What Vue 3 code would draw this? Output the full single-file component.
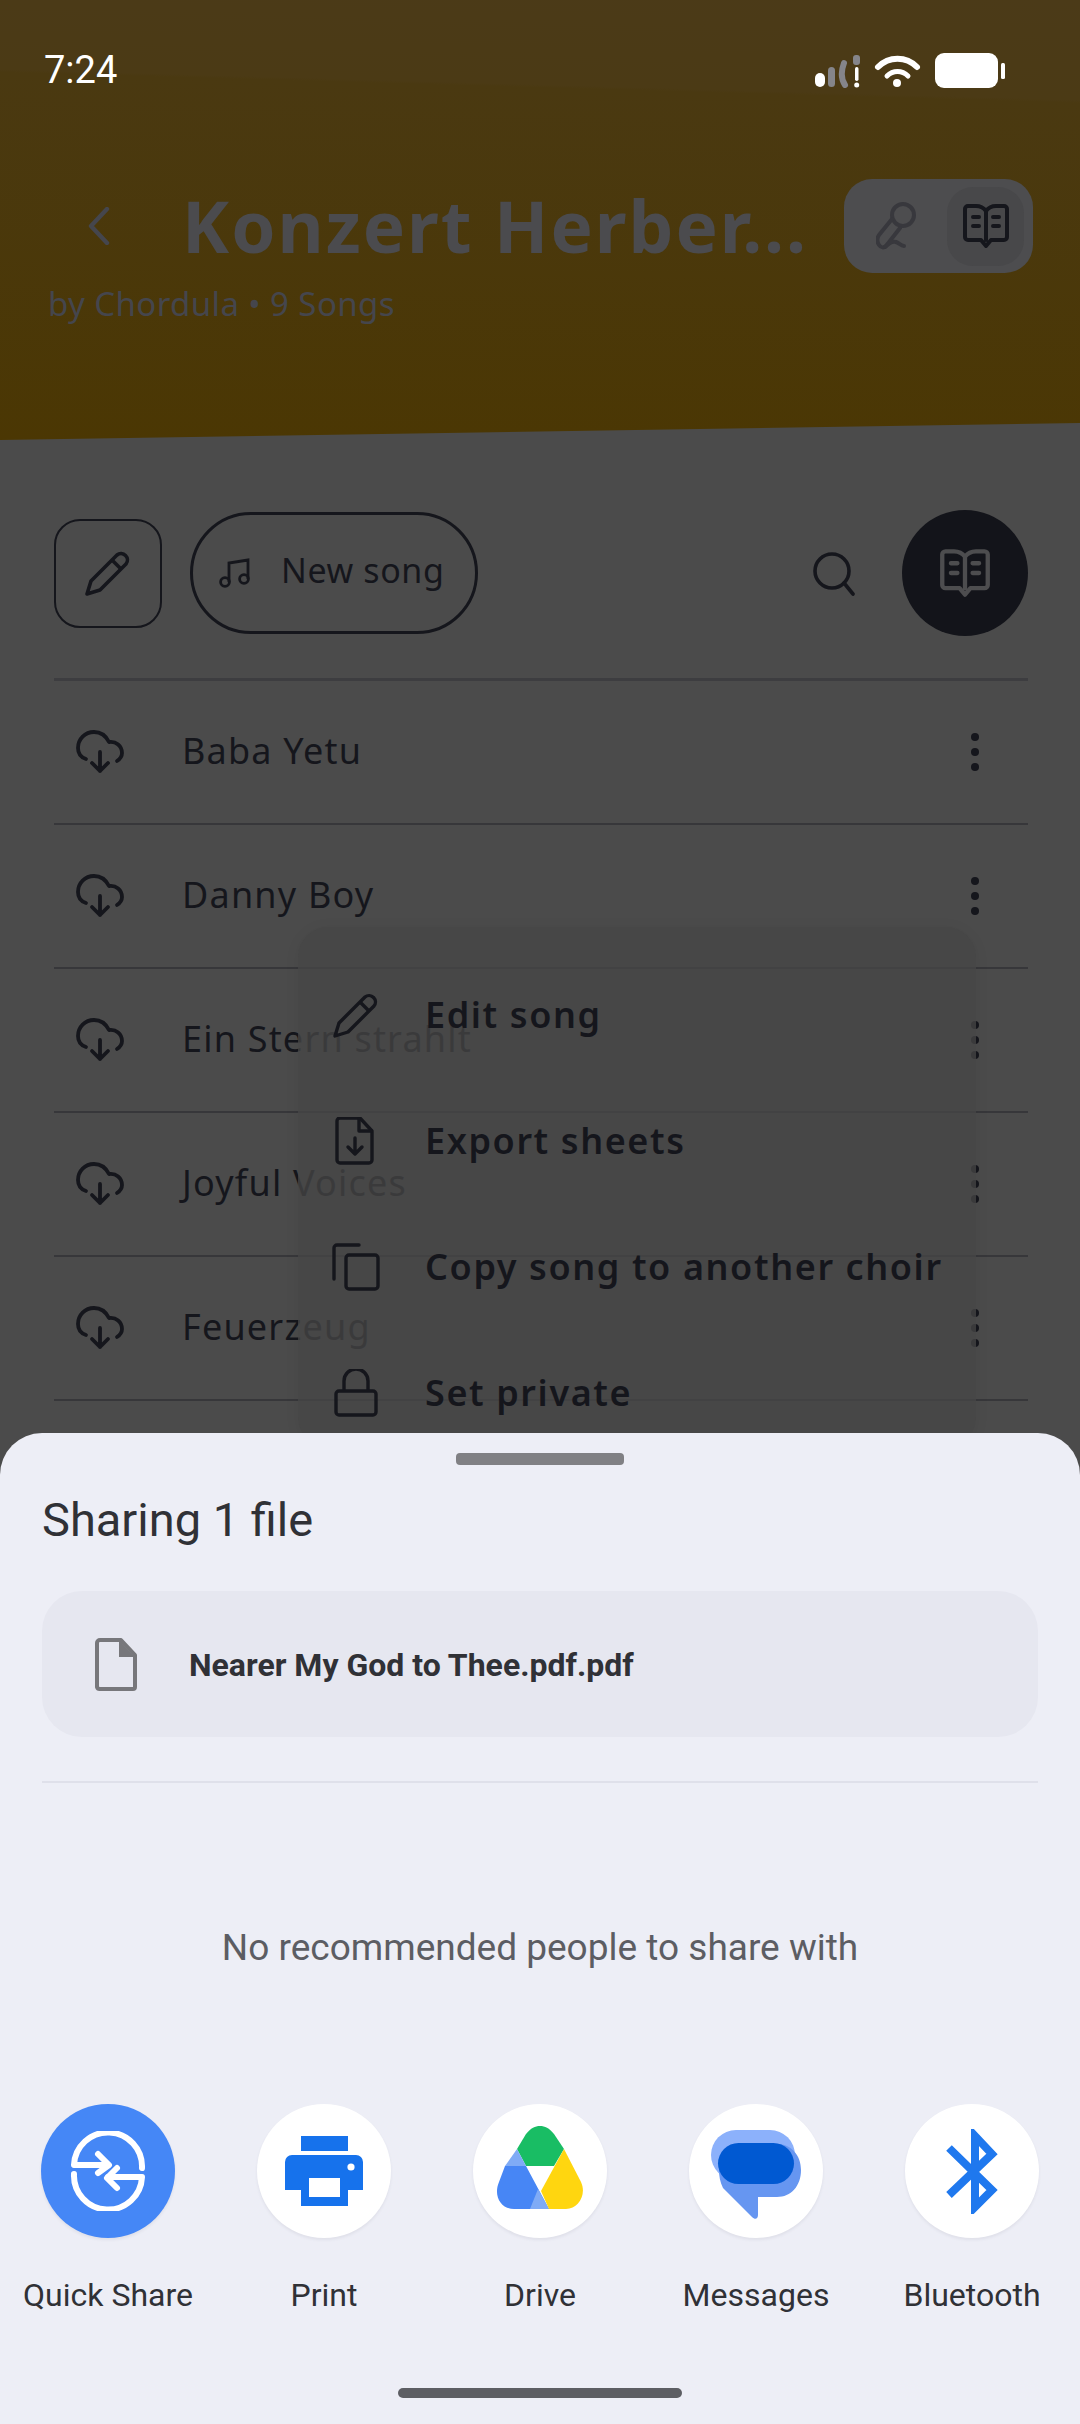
<template>
  <div class="page">
    <header class="hero">
      <div class="status">
        <span class="time">7:24</span>
        <svg class="status-icons" width="190" height="35" viewBox="0 0 190 35">
          <rect x="0" y="20" width="10" height="14" rx="5" fill="#fff" />
          <rect x="13" y="14" width="7" height="20" rx="3.5" fill="#85858a" />
          <path d="M29 10C26 18 26 26 30 32" fill="none" stroke="#85858a" stroke-width="6" stroke-linecap="round" />
          <rect x="38" y="2" width="7" height="10" rx="3" fill="#85858a" />
          <rect x="40" y="14" width="3.5" height="14" rx="1.7" fill="#fff" />
          <circle cx="41.7" cy="32" r="2.5" fill="#fff" />
          <path d="M63 14C74 3 91 3 102 14" fill="none" stroke="#fff" stroke-width="6" stroke-linecap="round" />
          <path d="M72 23C78 17 87 17 93 23" fill="none" stroke="#fff" stroke-width="5" stroke-linecap="round" />
          <circle cx="82" cy="30" r="4" fill="#fff" />
          <rect x="120" y="0" width="63" height="35" rx="9" fill="#fff" />
          <rect x="186" y="10" width="4" height="16" rx="1.5" fill="#fff" />
        </svg>
      </div>
      <div class="hero-row">
        <svg class="back" width="22" height="38" viewBox="0 0 22 38">
          <path d="M19 2L3 19l16 17" fill="none" stroke="#45464d" stroke-width="4.4" stroke-linecap="round" stroke-linejoin="round" />
        </svg>
        <h1 class="title">Konzert Herber...</h1>
        <div class="mode-toggle">
          <div class="mode-off">
            <svg width="42" height="48" viewBox="0 0 42 48" fill="none" stroke="#38383d" stroke-width="4" stroke-linecap="round" stroke-linejoin="round">
              <circle cx="27" cy="13" r="11" />
              <path d="M16 17L3 33c-2 3-2 7 0 10 2 3 5 3 7 1l14-18" />
              <path d="M9 45c4-4 8-6 11-5 3 1 5 4 8 4" />
            </svg>
          </div>
          <div class="mode-on">
            <svg width="48" height="46" viewBox="0 0 48 46" fill="none" stroke="#15161c" stroke-width="4" stroke-linejoin="round" stroke-linecap="round">
              <path d="M24 8C21 4 17 3 14 3H6a3 3 0 0 0-3 3v28a3 3 0 0 0 3 3h13l5 6 5-6h13a3 3 0 0 0 3-3V6a3 3 0 0 0-3-3h-8c-3 0-7 1-10 5zM24 8v29" />
              <path d="M11 14h6M11 23h6M31 14h6M31 23h6" />
            </svg>
          </div>
        </div>
      </div>
      <p class="byline">by Chordula • 9 Songs</p>
    </header>

    <div class="toolbar">
      <button class="edit-btn">
        <svg width="48" height="48" viewBox="0 0 48 48" fill="none" stroke="#15161c" stroke-width="3.6" stroke-linejoin="round">
          <path d="M3 45l4-13L33 6a6.4 6.4 0 0 1 9 9L16 41z" />
          <path d="M28 11l9 9" />
        </svg>
      </button>
      <button class="new-btn">
        <svg width="32" height="30" viewBox="0 0 32 30" fill="none" stroke="#15161c" stroke-width="2.8">
          <path d="M10 24V5l19-3v19" />
          <circle cx="6" cy="24" r="4.4" />
          <circle cx="25" cy="21" r="4.4" />
        </svg>
        <span>New song</span>
      </button>
      <svg class="search" width="44" height="45" viewBox="0 0 44 45" fill="none" stroke="#15161c" stroke-width="3.6" stroke-linecap="round">
        <circle cx="20" cy="20" r="17" />
        <path d="M32 32l9 11" />
      </svg>
      <div class="book-btn">
        <svg width="52" height="50" viewBox="0 0 48 46" fill="none" stroke="#4d4d4f" stroke-width="4" stroke-linejoin="round" stroke-linecap="round">
          <path d="M24 8C21 4 17 3 14 3H6a3 3 0 0 0-3 3v28a3 3 0 0 0 3 3h13l5 6 5-6h13a3 3 0 0 0 3-3V6a3 3 0 0 0-3-3h-8c-3 0-7 1-10 5zM24 8v29" />
          <path d="M11 14h6M11 23h6M31 14h6M31 23h6" />
        </svg>
      </div>
    </div>

    <ul class="songs">
      <li v-for="song in songs" :key="song" class="song">
        <svg class="cloud" width="48" height="44" viewBox="0 0 48 44" fill="none" stroke="#15161c" stroke-width="3.8" stroke-linecap="round" stroke-linejoin="round">
          <path d="M10 29C4 27 2 23 2 18 2 9 9 2 18 2c7 0 12 4 15 10 7-1 13 4 13 11 0 3-2 6-5 8" />
          <path d="M24 22v19M16 33l8 8 8-8" />
        </svg>
        <span class="song-name">{{ song }}</span>
        <div class="kebab"><i></i><i></i><i></i></div>
      </li>
    </ul>

    <div class="menu">
      <div class="menu-item">
        <svg width="48" height="48" viewBox="0 0 48 48" fill="none" stroke="#15161c" stroke-width="3.4" stroke-linejoin="round">
          <path d="M3 45l4-13L33 6a6.4 6.4 0 0 1 9 9L16 41z" />
          <path d="M28 11l9 9" />
        </svg>
        <span>Edit song</span>
      </div>
      <div class="menu-item">
        <svg width="48" height="48" viewBox="0 0 48 48" fill="none" stroke="#15161c" stroke-width="3.4" stroke-linejoin="round" stroke-linecap="round">
          <path d="M8 1h20l12 13v29a3 3 0 0 1-3 3H8a3 3 0 0 1-3-3V4a3 3 0 0 1 3-3z" />
          <path d="M27 2v12h12M23 21v15M16 30l7 7 7-7" />
        </svg>
        <span>Export sheets</span>
      </div>
      <div class="menu-item">
        <svg width="48" height="48" viewBox="0 0 48 48" fill="none" stroke="#15161c" stroke-width="3.4" stroke-linejoin="round" stroke-linecap="round">
          <path d="M2 36V5a3 3 0 0 1 3-3h22" />
          <rect x="14" y="12" width="32" height="34" rx="3" />
        </svg>
        <span>Copy song to another choir</span>
      </div>
      <div class="menu-item">
        <svg width="44" height="48" viewBox="0 0 44 48" fill="none" stroke="#15161c" stroke-width="3.4" stroke-linejoin="round">
          <path d="M10 22V12a12 12 0 0 1 24 0v10" />
          <rect x="2" y="22" width="40" height="24" rx="3" />
        </svg>
        <span>Set private</span>
      </div>
    </div>

    <section class="sheet">
      <div class="handle"></div>
      <h2 class="sheet-title">Sharing 1 file</h2>
      <div class="file-card">
        <svg width="42" height="53" viewBox="0 0 42 53">
          <path d="M5 2h21l14 15v32a2 2 0 0 1-2 2H5a3 3 0 0 1-3-2V5a3 3 0 0 1 3-3z" fill="none" stroke="#77777b" stroke-width="4" stroke-linejoin="round" />
          <path d="M24 2l16 17H24z" fill="#77777b" />
        </svg>
        <span class="file-name">Nearer My God to Thee.pdf.pdf</span>
      </div>
      <div class="sheet-line"></div>
      <p class="empty">No recommended people to share with</p>
      <div class="targets">
        <div class="target">
          <div class="disc disc-blue">
            <svg width="80" height="80" viewBox="0 0 80 80" fill="none" stroke="#fff" stroke-width="6" stroke-linecap="round" stroke-linejoin="round">
              <path d="M74 37A34 34 0 0 0 6 34h34" />
              <path d="M30 23l11 11-11 8" />
              <path d="M6 43a34 34 0 0 0 68 3H40" />
              <path d="M49 37L39 47l10 10" />
            </svg>
          </div>
          <span>Quick Share</span>
        </div>
        <div class="target">
          <div class="disc">
            <svg width="78" height="70" viewBox="0 0 78 70" fill="#1672ec">
              <rect x="16" y="0" width="47" height="15" />
              <path d="M7 19h64a7 7 0 0 1 7 7v28H63v16H16V54H0V26a7 7 0 0 1 7-7z" />
              <rect x="24" y="42" width="31" height="19" fill="#fff" />
              <circle cx="66" cy="31" r="3.6" fill="#fff" />
            </svg>
          </div>
          <span>Print</span>
        </div>
        <div class="target">
          <div class="disc">
            <svg class="drive" width="90" height="83" viewBox="-1 0 90 83">
              <path d="M30 40L21 23l9-15C35 2 39 0 44 0s9 2 14 8l10 15-10 17z" fill="#19bd64" />
              <path d="M21 23l9 17H9z" fill="#7fabf6" />
              <path d="M9 40h21l23 43H18C5 83-3 70 3 56z" fill="#4786f5" />
              <path d="M42 63l11 20H34z" fill="#7fabf6" />
              <path d="M68 23l17 33c6 13-3 27-15 27H53l-8-18z" fill="#ffd60f" />
            </svg>
          </div>
          <span>Drive</span>
        </div>
        <div class="target">
          <div class="disc">
            <svg class="messages" width="90" height="89" viewBox="0 0 90 89">
              <rect x="0" y="0" width="84" height="50" rx="25" fill="#8cb1fb" />
              <path d="M34 14h32c14 0 24 11 24 26 0 16-10 27-24 27H47v18c0 4-3 5-6 2L12 58C9 52 8 46 8 40c0-15 12-26 26-26z" fill="#6696f1" />
              <rect x="7" y="13" width="76" height="41" rx="20.5" fill="#0059d2" />
            </svg>
          </div>
          <span>Messages</span>
        </div>
        <div class="target">
          <div class="disc">
            <svg width="52" height="85" viewBox="0 0 52 85" fill="none" stroke="#1f78ee" stroke-width="8">
              <path d="M3 19l43 42-17 17V7l17 18L3 66" />
            </svg>
          </div>
          <span>Bluetooth</span>
        </div>
      </div>
      <div class="nav-pill"></div>
    </section>
  </div>
</template>

<script setup>
const songs = ['Baba Yetu', 'Danny Boy', 'Ein Stern strahlt', 'Joyful Voices', 'Feuerzeug']
</script>

<style>
html, body {
  margin: 0;
  background: #4b4b4b;
}
</style>

<style scoped>
.page {
  position: relative;
  width: 1080px;
  height: 2424px;
  overflow: hidden;
  background: #4b4b4b;
  font-family: "Noto Sans", sans-serif;
  color: #15161c;
}

.hero {
  height: 440px;
  background: linear-gradient(181.64deg, #4b3a18 0, #4b3a15 100px, #4a3911 103px, #4b3703 100%);
  clip-path: polygon(0 0, 100% 0, 100% 423px, 0 440px);
}

.status {
  height: 179px;
  padding: 53px 75px 0 44px;
  box-sizing: border-box;
  display: flex;
  justify-content: space-between;
  align-items: flex-start;
}

.time {
  font-family: Roboto, sans-serif;
  font-size: 38px;
  line-height: 35px;
  color: #fff;
}

.hero-row {
  height: 94px;
  display: flex;
  align-items: center;
  padding: 0 47px 0 88px;
}

.title {
  flex: 1;
  margin: 0 0 0 72px;
  font-size: 71px;
  font-weight: 700;
  line-height: 94px;
  letter-spacing: 2px;
  color: #4b4b4e;
  white-space: nowrap;
}

.mode-toggle {
  width: 189px;
  height: 94px;
  border-radius: 28px;
  background: #4d4d4f;
  display: flex;
  align-items: center;
  box-sizing: border-box;
  padding-right: 9px;
}

.mode-off {
  flex: 1;
  display: flex;
  justify-content: center;
  padding-left: 2px;
}

.mode-on {
  width: 77px;
  height: 79px;
  border-radius: 26px;
  background: #48484a;
  display: flex;
  align-items: center;
  justify-content: center;
}

.byline {
  margin: 11px 0 0 48px;
  font-size: 33px;
  line-height: 40px;
  letter-spacing: 0.4px;
  color: #45464d;
}

.toolbar {
  margin-top: 70px;
  height: 126px;
  padding: 0 52px 0 54px;
  display: flex;
  align-items: center;
}

.edit-btn {
  width: 108px;
  height: 109px;
  padding: 0;
  border: 2px solid #15161c;
  border-radius: 26px;
  background: none;
  display: flex;
  align-items: center;
  justify-content: center;
}

.new-btn {
  width: 288px;
  height: 122px;
  margin-left: 28px;
  padding: 0 0 0 26px;
  border: 3px solid #15161c;
  border-radius: 61px;
  background: none;
  display: flex;
  align-items: center;
  gap: 30px;
  font-family: inherit;
  font-size: 34px;
  letter-spacing: 0.6px;
  color: #15161c;
}

.new-btn span {
  margin-top: -6px;
}

.search {
  margin-left: auto;
  margin-right: 46px;
}

.book-btn {
  width: 126px;
  height: 126px;
  border-radius: 50%;
  background: #13141a;
  display: flex;
  align-items: center;
  justify-content: center;
}

.songs {
  list-style: none;
  margin: 42px 52px 0 54px;
  padding: 0;
  border-top: 3px solid #3d3d40;
}

.song {
  height: 142px;
  border-bottom: 2px solid #37373a;
  display: flex;
  align-items: center;
  padding-left: 22px;
}

.song-name {
  margin-left: 58px;
  margin-top: -4px;
  font-size: 36px;
  letter-spacing: 1.2px;
}

.kebab {
  margin-left: auto;
  margin-right: 49px;
  display: flex;
  flex-direction: column;
  gap: 7px;
}

.kebab i {
  width: 8px;
  height: 8px;
  border-radius: 50%;
  background: #15161c;
}

.menu {
  position: absolute;
  left: 298px;
  top: 927px;
  width: 678px;
  height: 520px;
  padding-top: 25px;
  box-sizing: border-box;
  border-radius: 30px;
  background: rgba(70, 70, 70, 0.76);
  box-shadow: 0 2px 16px rgba(0, 0, 0, 0.05);
}

.menu-item {
  height: 126px;
  padding-left: 34px;
  display: flex;
  align-items: center;
  gap: 45px;
  font-size: 36px;
  font-weight: 600;
  letter-spacing: 1.6px;
}

.menu-item span {
  margin-top: -2px;
}

.menu-item svg {
  width: 48px;
  flex: none;
}

.sheet {
  position: absolute;
  left: 0;
  right: 0;
  top: 1433px;
  bottom: 0;
  border-radius: 42px 42px 0 0;
  background: #edeef6;
  font-family: Roboto, sans-serif;
  color: #303136;
}

.handle {
  width: 168px;
  height: 12px;
  margin: 20px auto 0;
  border-radius: 4px;
  background: #808084;
}

.sheet-title {
  margin: 29px 0 0 42px;
  font-size: 47px;
  font-weight: 400;
  line-height: 52px;
}

.file-card {
  height: 146px;
  margin: 45px 42px 0;
  padding-left: 53px;
  border-radius: 40px;
  background: #e6e7f0;
  display: flex;
  align-items: center;
  gap: 53px;
}

.file-name {
  font-size: 32px;
  font-weight: 700;
  margin-left: -1px;
  margin-top: 2px;
}

.sheet-line {
  height: 2px;
  margin: 44px 42px 0;
  background: #dfe0ea;
}

.empty {
  margin: 143px 0 0;
  text-align: center;
  font-size: 37px;
  line-height: 44px;
  color: #5c5d63;
}

.targets {
  margin-top: 134px;
  display: grid;
  grid-template-columns: repeat(5, 216px);
}

.target {
  display: flex;
  flex-direction: column;
  align-items: center;
  font-size: 32px;
  line-height: 40px;
}

.target span {
  margin-top: 37px;
  white-space: nowrap;
}

.disc {
  width: 134px;
  height: 134px;
  border-radius: 50%;
  background: #fff;
  box-shadow: 0 2px 3px rgba(60, 64, 90, 0.08);
  display: flex;
  align-items: center;
  justify-content: center;
}

.disc-blue {
  background: #4587f6;
}

.drive {
  margin-bottom: 7px;
}

.messages {
  margin-top: 6px;
}

.nav-pill {
  width: 284px;
  height: 10px;
  margin: 73px auto 0;
  border-radius: 5px;
  background: #5d5e63;
}
</style>
